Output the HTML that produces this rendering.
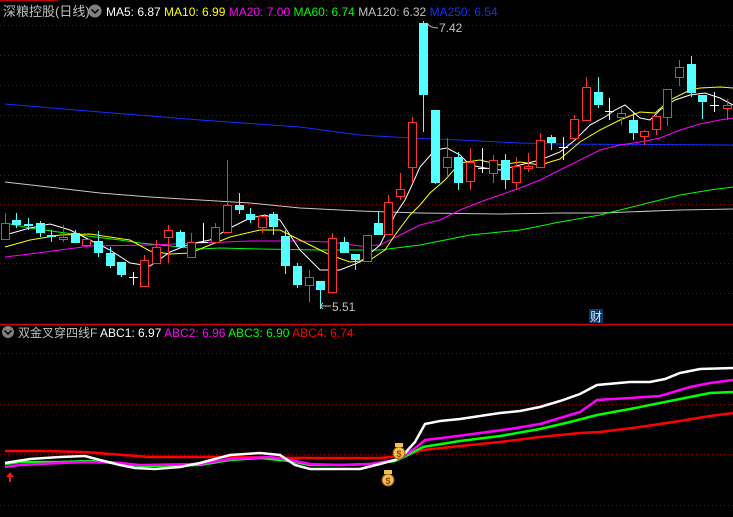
<!DOCTYPE html>
<html><head><meta charset="utf-8"><style>
html,body{margin:0;padding:0;background:#000;width:733px;height:517px;overflow:hidden}
svg{display:block}
text{font-family:"Liberation Sans","Noto Sans CJK SC",sans-serif;font-size:12px}
</style></head><body>
<svg id="s" width="733" height="517" viewBox="0 0 733 517" xmlns="http://www.w3.org/2000/svg">
<rect width="733" height="517" fill="#000"/>
<line x1="0" y1="0.5" x2="58" y2="0.5" stroke="#c00000"/>
<g stroke="#8b0000" stroke-dasharray="1 3" stroke-width="1">
<line x1="0" y1="25.5" x2="733" y2="25.5"/><line x1="0" y1="55.5" x2="733" y2="55.5"/>
<line x1="0" y1="85.5" x2="733" y2="85.5"/><line x1="0" y1="115.5" x2="733" y2="115.5"/>
<line x1="0" y1="145.5" x2="733" y2="145.5"/><line x1="0" y1="175.5" x2="733" y2="175.5"/>
<line x1="0" y1="204.5" x2="733" y2="204.5"/><line x1="0" y1="233.5" x2="733" y2="233.5"/>
<line x1="0" y1="263.5" x2="733" y2="263.5"/><line x1="0" y1="293.5" x2="733" y2="293.5"/>
<line x1="0" y1="353.5" x2="733" y2="353.5"/><line x1="0" y1="404.5" x2="733" y2="404.5"/>
<line x1="0" y1="454.5" x2="733" y2="454.5"/><line x1="0" y1="505.5" x2="733" y2="505.5"/>
</g>
<line x1="0" y1="324.5" x2="733" y2="324.5" stroke="#d00000" stroke-width="1.5"/>
<g fill="none" stroke-width="1">
<polyline stroke="#c8c8c8" points="5,182 40,186 100,193 150,197 200,200 250,203 300,208 340,210 360,211 420,213 500,214 560,213 600,213 680,210 733,209"/>
<polyline stroke="#1030ff" points="5,104 100,112 200,120 300,127 360,135 410,138 460,140 520,143 560,144 733,145"/>
<polyline stroke="#00ff00" points="5,223 30,228 80,235 120,240 140,243 200,249 220,248 260,249 320,250 380,250 420,245 470,235 520,230 560,222 600,215 640,205 680,195 710,190 733,187"/>
<polyline stroke="#ff00ff" points="5,257 30,254 60,250 90,246 150,245 200,243 250,241 300,241 330,242 360,246 380,245 400,235 420,225 440,220 460,210 480,202 500,195 520,188 540,180 560,170 580,160 600,150 620,145 640,142 660,138 680,130 700,124 720,120 733,118"/>
<polyline stroke="#ffff00" points="5,247 30,240 60,235 90,234 130,240 150,251 170,254 190,253 210,245 230,237 260,230 280,230 300,240 330,255 350,262 370,260 385,250 395,235 410,215 420,205 430,193 445,180 460,163 480,160 500,165 520,162 540,165 560,159 580,142 600,130 620,120 640,112 655,113 670,100 690,90 700,88 720,87 733,88"/>
<polyline stroke="#ffffff" points="5,235 30,228 50,224 70,230 90,240 110,250 130,263 150,266 170,252 190,244 210,240 230,228 250,218 265,215 280,220 300,250 320,270 340,270 360,262 380,245 395,215 405,200 412,185 420,167 435,150 447,148 460,155 470,165 485,168 500,170 520,165 540,160 560,152 575,140 590,125 605,117 615,110 625,105 640,118 650,120 660,110 675,100 690,95 705,93 720,98 733,105"/>
</g>
<g id="c"></g>
<g fill="none" stroke-width="2.5">
<polyline stroke="#ff0000" points="5,451 40,451 85,452 110,454 150,457 230,457 300,458 330,458 380,458 400,456 423,450 460,446 500,442 540,437 580,433 600,432 640,427 680,421 710,416 733,413"/>
<polyline stroke="#00ff00" points="5,464 20,462 60,462 90,461 120,463 140,466 200,465 230,460 260,458 290,461 310,465 340,465 370,464 395,461 410,454 423,447 460,441 500,436 540,429 570,422 597,415 630,409 660,403 690,397 710,393 733,392"/>
<polyline stroke="#ff00ff" points="5,467 20,465 60,463 90,462 120,463 140,465 200,464 230,459 270,457 290,460 310,464 340,465 370,464 395,460 405,455 418,446 425,440 450,437 480,433 510,429 540,424 560,418 580,412 597,400 630,398 660,396 690,387 710,383 733,380"/>
<polyline stroke="#ffffff" points="5,463 30,459 60,457 85,456 100,460 120,465 135,468 155,469 180,467 200,463 230,455 260,453 280,455 295,465 310,469 330,469 360,469 380,464 395,460 405,453 415,442 425,424 440,421 460,419 480,416 500,413 520,411 540,407 560,401 580,394 597,385 630,382 650,382 665,379 680,373 700,369 733,368"/>
</g>
<g>
<circle cx="399" cy="453" r="6" fill="#f0c050" stroke="#8a5a00"/><rect x="395" y="443" width="8" height="4" fill="#f0c050"/><text x="399" y="457" text-anchor="middle" fill="#a04000" style="font-size:9px;font-weight:bold">$</text>
<circle cx="388" cy="480" r="6" fill="#f0c050" stroke="#8a5a00"/><rect x="384" y="470" width="8" height="4" fill="#f0c050"/><text x="388" y="484" text-anchor="middle" fill="#a04000" style="font-size:9px;font-weight:bold">$</text>
<path d="M10 472 L6 477 L9 477 L9 482 L11 482 L11 477 L14 477 Z" fill="#ff1010"/>
<rect x="589" y="309" width="14" height="14" fill="#0a3a6a"/><text x="590" y="321" fill="#e0e0ff">财</text>
</g>
<text x="3" y="16" fill="#c0c0c0" style="font-size:13px">深粮控股(日线)</text>
<circle cx="95" cy="11" r="6.5" fill="#808080"/><path d="M91.5 9.5 L95 13 L98.5 9.5" stroke="#000" stroke-width="1.5" fill="none"/>
<text x="106" y="16"><tspan fill="#fff">MA5: 6.87 </tspan><tspan fill="#ffff00">MA10: 6.99 </tspan><tspan fill="#ff00ff">MA20: 7.00 </tspan><tspan fill="#00ff00">MA60: 6.74 </tspan><tspan fill="#c0c0c0">MA120: 6.32 </tspan><tspan fill="#1030ff">MA250: 6.54</tspan></text>
<text x="439" y="32" fill="#c0c0c0">7.42</text><path d="M427 23 Q430 28 438 28" stroke="#c0c0c0" fill="none"/>
<text x="332" y="311" fill="#c0c0c0">5.51</text><path d="M320 306 L331 306 M320 306 L323 303 M320 306 L323 309" stroke="#c0c0c0" fill="none"/>
<circle cx="8" cy="332" r="6" fill="#808080"/><path d="M4.5 330.5 L8 334 L11.5 330.5" stroke="#000" stroke-width="1.5" fill="none"/>
<text x="18" y="337" style="font-size:12px"><tspan fill="#c0c0c0">双金叉穿四线F </tspan><tspan fill="#fff">ABC1: 6.97 </tspan><tspan fill="#ff00ff">ABC2: 6.96 </tspan><tspan fill="#00ff00">ABC3: 6.90 </tspan><tspan fill="#ff0000">ABC4: 6.74</tspan></text>
</svg>
<script>
var C=[[5,'r',223,239,213,239],[16,'c',220,225,213,228],[28,'c',224,226,218,230],[40,'c',223,233,221,237],[51,'c',235,237,230,242],[63,'r',237,239,225,242],[75,'c',233,243,230,243],[86,'r',239,245,239,245],[98,'c',241,253,231,257],[110,'c',253,266,247,268],[121,'c',262,275,262,277],[133,'x',277,277,272,285],[144,'r',260,286,255,286],[156,'r',247,263,240,263],[168,'r',230,237,225,263],[180,'c',232,247,230,247],[191,'r',242,257,233,257],[203,'x',242,242,223,243],[215,'r',227,242,223,242],[227,'r',205,232,160,232],[239,'c',205,210,193,214],[250,'c',214,220,208,223],[262,'r',216,227,216,233],[273,'c',214,227,212,235],[285,'c',236,266,230,274],[297,'c',266,285,263,288],[309,'r',277,285,270,302],[320,'c',281,290,281,309],[332,'r',238,292,233,293],[344,'c',242,253,237,253],[355,'c',254,260,254,270],[367,'r',235,261,235,261],[378,'c',223,235,212,235],[388,'r',202,234,195,234],[400,'r',189,196,173,200],[412,'r',122,167,117,183],[423,'c',23,95,21,132],[435,'c',110,183,110,184],[447,'r',157,167,138,177],[458,'c',157,183,152,190],[470,'r',162,181,148,190],[482,'x',168,168,148,173],[493,'r',160,173,155,183],[505,'c',160,180,154,189],[516,'r',166,182,157,190],[528,'r',166,168,153,172],[540,'r',140,167,133,168],[551,'c',137,143,135,150],[563,'x',147,147,137,160],[574,'r',119,138,115,140],[586,'r',87,120,77,120],[598,'c',92,105,77,108],[609,'x',111,111,98,120],[621,'r',113,117,108,125],[633,'c',120,133,113,140],[644,'r',131,136,130,145],[656,'r',116,129,115,135],[667,'r',89,117,89,126],[679,'r',67,77,60,86],[691,'c',64,93,56,97],[702,'c',95,102,95,119],[714,'x',105,105,92,112],[727,'r',105,108,99,120]];
var g=document.getElementById('c'),h='';
C.forEach(function(k){var x=k[0],t=k[1],col=t=='r'?'#ff3030':(t=='c'?'#54ffff':'#ffffff');
h+='<line x1="'+(x+.5)+'" y1="'+k[4]+'" x2="'+(x+.5)+'" y2="'+k[5]+'" stroke="'+col+'"/>';
if(t=='x'){h+='<line x1="'+(x-4)+'" y1="'+(k[2]+.5)+'" x2="'+(x+5)+'" y2="'+(k[2]+.5)+'" stroke="'+col+'"/>';}
else if(t=='r'){h+='<rect x="'+(x-3.5)+'" y="'+(k[2]+.5)+'" width="8" height="'+Math.max(1,k[3]-k[2])+'" fill="#000" stroke="'+col+'"/>';}
else{h+='<rect x="'+(x-4)+'" y="'+k[2]+'" width="9" height="'+Math.max(2,k[3]-k[2])+'" fill="'+col+'"/>';}});
g.innerHTML=h;
</script>
</body></html>
